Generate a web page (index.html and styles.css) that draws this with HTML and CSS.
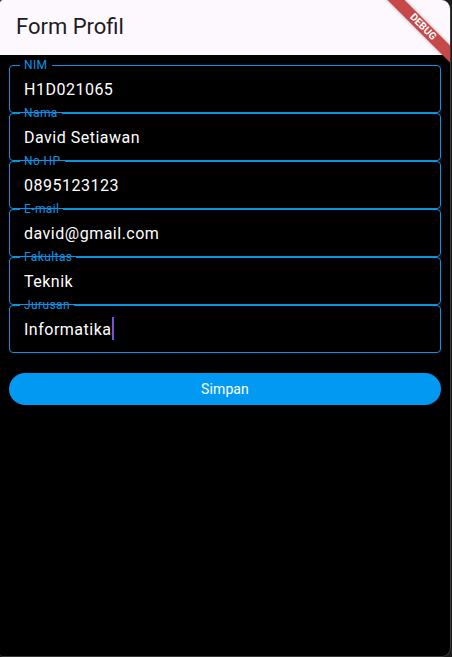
FILE: index.html
```html
<!DOCTYPE html>
<html lang="id">
<head>
<meta charset="utf-8">
<title>Form Profil</title>
<link rel="stylesheet" href="styles.css">
</head>
<body>
<div class="window">
  <header class="appbar">
    <h1 class="title">Form Profil</h1>
  </header>
  <div class="banner">DEBUG</div>
  <main class="form">
    <fieldset class="field"><legend class="label">NIM</legend><div class="value">H1D021065</div></fieldset>
    <fieldset class="field"><legend class="label">Nama</legend><div class="value">David Setiawan</div></fieldset>
    <fieldset class="field"><legend class="label">No HP</legend><div class="value">0895123123</div></fieldset>
    <fieldset class="field"><legend class="label">E-mail</legend><div class="value">david@gmail.com</div></fieldset>
    <fieldset class="field"><legend class="label">Fakultas</legend><div class="value">Teknik</div></fieldset>
    <fieldset class="field"><legend class="label">Jurusan</legend><div class="value">Informatika<span class="caret"></span></div></fieldset>
    <button class="btn" type="button">Simpan</button>
  </main>
</div>
</body>
</html>
```

FILE: styles.css
```css
html, body {
  margin: 0;
  padding: 0;
  background: #1b1b1b;
  font-family: Roboto, "Noto Sans", Arial, sans-serif;
}

.window {
  position: relative;
  width: 451px;
  height: 657px;
  box-sizing: border-box;
  background: #000;
  border-right: 1px solid #3a3a3a;
  border-bottom: 1px solid #3a3a3a;
  border-radius: 3px 9px 9px 3px;
  overflow: hidden;
}

.appbar {
  height: 55px;
  box-sizing: border-box;
  background: #fdf7fe;
  display: flex;
  align-items: center;
  padding: 0 0 2px 16px;
}

.title {
  margin: 0;
  font-size: 22px;
  font-weight: 400;
  line-height: 28px;
  color: #1d1b20;
}

.banner {
  position: absolute;
  left: 363px;
  top: 21px;
  width: 120px;
  height: 12px;
  line-height: 12px;
  background: #c64848;
  color: #fff;
  font-size: 10.2px;
  font-weight: 700;
  text-align: center;
  transform: rotate(45deg);
  box-shadow: 0 0 4px rgba(0, 0, 0, 0.3);
}

.form {
  display: flex;
  flex-direction: column;
  padding: 3px 9px 0 9px;
}

.field {
  margin: 0;
  padding: 0 0 11px;
  border: 1px solid #0a93e6;
  border-radius: 4px;
  min-width: 0;
}

.field + .field {
  margin-top: -7px;
}

.label {
  margin-left: 10px;
  padding: 0 4px;
  font-size: 12px;
  line-height: 15px;
  color: #0b95e9;
  letter-spacing: 0.4px;
}

.value {
  margin-top: 5px;
  height: 24px;
  line-height: 24px;
  padding-left: 14px;
  color: #fff;
  font-size: 16px;
  letter-spacing: 0.5px;
}

.field .value {
  margin-bottom: -1px;
}

.caret {
  display: inline-block;
  width: 2px;
  height: 23px;
  margin-top: -1px;
  margin-left: 1px;
  vertical-align: top;
  background: #7b4fd6;
}

.btn {
  margin-top: 20px;
  height: 32px;
  border: none;
  border-radius: 16px;
  background: #0299f2;
  color: #fff;
  font-family: Roboto, "Noto Sans", Arial, sans-serif;
  font-size: 14px;
  font-weight: 400;
  letter-spacing: 0.1px;
  cursor: pointer;
}
```
